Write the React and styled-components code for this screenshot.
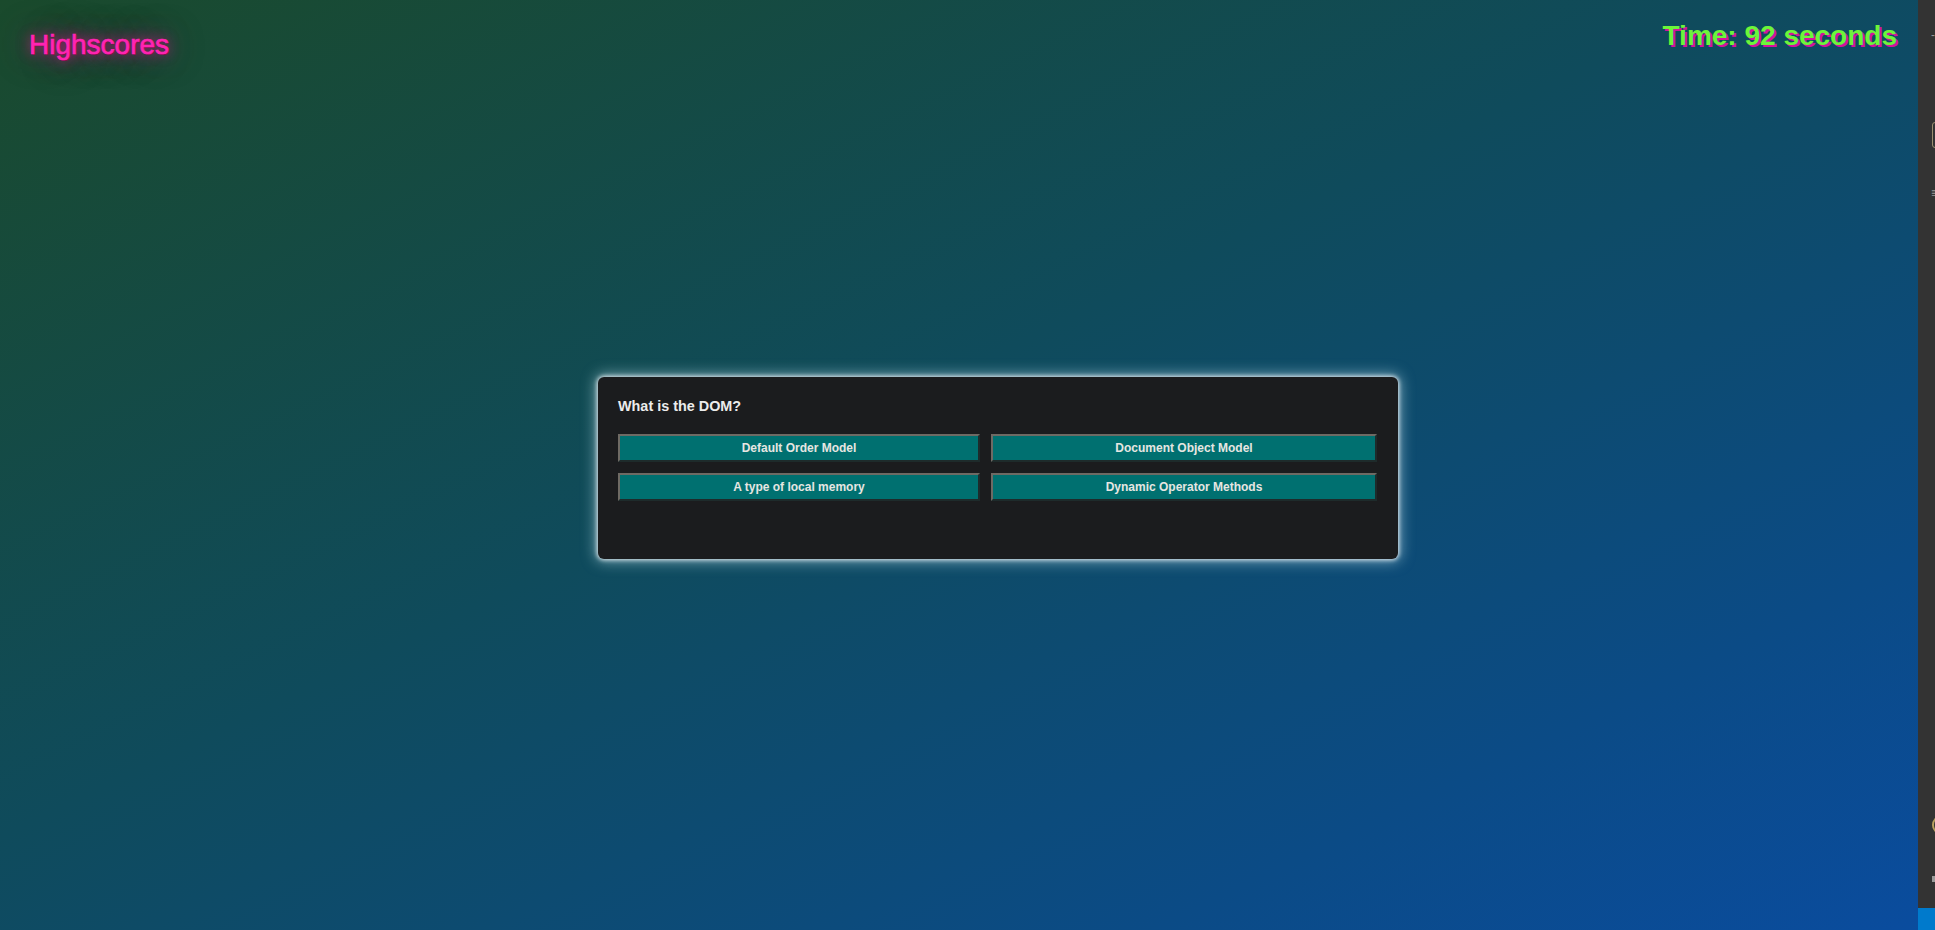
import styled, { createGlobalStyle } from "styled-components";

const GlobalStyle = createGlobalStyle`
html, body {
margin:0;
padding:0;
height:100%;
overflow:hidden;
}
body {
font-family: "Liberation Sans", Arial, sans-serif;
}`

const answers = [
    "Default Order Model",
    "Document Object Model",
    "A type of local memory",
    "Dynamic Operator Methods",
]

export default function App() {
    return <Window>
        <GlobalStyle />
        <Main>
            <Header>
                <Highscores>Highscores</Highscores>
                <Timer>Time: 92 seconds</Timer>
            </Header>
            <Stage>
                <Card>
                    <Question>What is the DOM?</Question>
                    <Answers>
                        {answers.map(a => (
                            <Answer key={a}>{a}</Answer>
                        ))}
                    </Answers>
                </Card>
            </Stage>
        </Main>
        <SidePanel>
            <Mark $top={28}>-</Mark>
            <Tab $top={122} />
            <Mark $top={186}>≡</Mark>
            <Dot $top={816} />
            <Square $top={876} />
            <StatusBar />
        </SidePanel>
    </Window>
}

const Window = styled.div`
display:flex;
height:100vh;
width:100vw;`

const Main = styled.main`
flex:1;
display:grid;
grid-template-columns:1fr;
grid-template-rows:1fr;
background:linear-gradient(to bottom right, #1a4a2c 0%, #0f4b5c 45%, #0b4b86 80%, #0a4c9e 100%);`

const Header = styled.header`
grid-area:1 / 1;
align-self:start;
display:flex;
justify-content:space-between;
align-items:flex-start;
padding:0 21px 0 29px;`

const Highscores = styled.a`
margin-top:29px;
font-size:28px;
color:#ff24b2;
-webkit-text-stroke:0.7px #ff24b2;
cursor:pointer;
text-shadow: 1px 1px 0 #7a0f4a, 0 0 12px rgba(255,20,160,0.7), 0 0 24px rgba(230,20,150,0.6), 0 0 36px rgba(200,20,130,0.5);`

const Timer = styled.div`
margin-top:20px;
font-size:28px;
font-weight:bold;
color:#6cf53a;
text-shadow: 2px 2px 0 #d6109e;`

const Stage = styled.div`
grid-area:1 / 1;
display:flex;
align-items:center;
padding:6px 0 0 598px;`

const Card = styled.section`
width:800px;
box-sizing:border-box;
height:182px;
padding:21px 20px;
background-color:#1b1c1e;
border-radius:6px;
box-shadow: 0 0 4px 1px rgba(235,240,245,0.9), 0 0 14px 3px rgba(190,225,235,0.55);`

const Question = styled.h2`
margin:0 0 20px 0;
font-size:14.4px;
font-weight:bold;
color:#ececec;`

const Answers = styled.div`
display:grid;
grid-template-columns:362px 386px;
column-gap:11px;
row-gap:11px;`

const Answer = styled.button`
height:28px;
padding:0;
font-family:"Liberation Sans", Arial, sans-serif;
font-size:12px;
font-weight:bold;
color:#e6e6e2;
background-color:#007070;
border-style:solid;
border-width:2px;
border-color:#6e6a64 #1e2b2b #1e2b2b #6e6a64;
cursor:pointer;`

const SidePanel = styled.aside`
position:relative;
width:17px;
background-color:#333333;`

const Mark = styled.span`
position:absolute;
top:${p => p.$top}px;
left:13px;
font-size:12px;
color:#9a9a9a;`

const Tab = styled.span`
position:absolute;
top:${p => p.$top}px;
left:14px;
width:8px;
height:24px;
border:1px solid #9a8f70;
border-radius:3px;`

const Dot = styled.span`
position:absolute;
top:${p => p.$top}px;
left:14px;
width:12px;
height:14px;
border:2px solid #b8a060;
border-radius:50%;`

const Square = styled.span`
position:absolute;
top:${p => p.$top}px;
left:14px;
width:6px;
height:6px;
background:#9a9a9a;`

const StatusBar = styled.div`
position:absolute;
left:0;
right:0;
bottom:0;
height:22px;
background-color:#007acc;`
